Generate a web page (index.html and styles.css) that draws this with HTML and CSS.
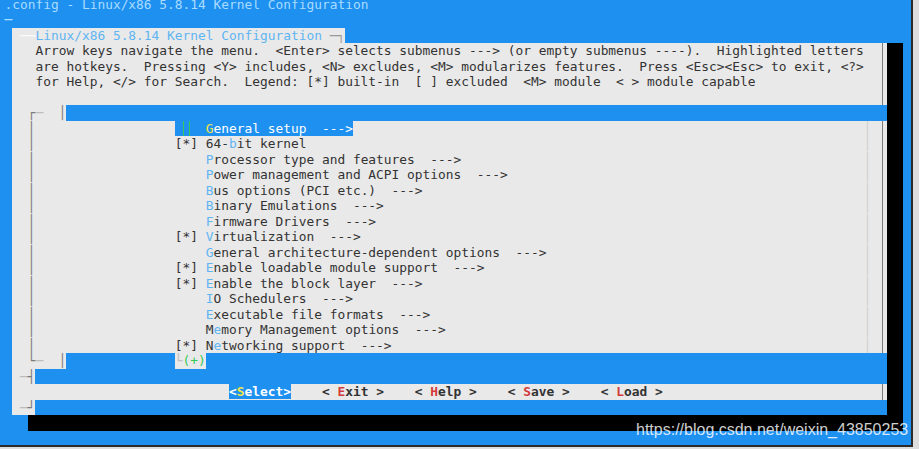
FILE: index.html
```html
<!DOCTYPE html>
<html lang="en">
<head>
<meta charset="UTF-8" />
<title>.config - Linux/x86 5.8.14 Kernel Configuration</title>
<link rel="stylesheet" href="styles.css">
</head>
<body>

<div class="screen">
  <div class="term">
    <div class="row"><span class="bt">.config - Linux/x86 5.8.14 Kernel Configuration</span></div>
    <div class="row"><span class="bt">─</span></div>
    <div class="row"><span class="c1"> </span><span class="tab"> <span class="wl">──</span><span class="hk">Linux/x86 5.8.14 Kernel Configuration</span> <span class="ln">─┐</span></span></div>
    <div class="row"><span class="c1"> </span><span class="dlg"><span>   Arrow keys navigate the menu.  &lt;Enter&gt; selects submenus ---&gt; (or empty submenus ----).  Highlighted letters</span></span><span class="sh"></span></div>
    <div class="row"><span class="c1"> </span><span class="dlg"><span>   are hotkeys.  Pressing &lt;Y&gt; includes, &lt;N&gt; excludes, &lt;M&gt; modularizes features.  Press &lt;Esc&gt;&lt;Esc&gt; to exit, &lt;?&gt;</span></span><span class="sh"></span></div>
    <div class="row"><span class="c1"> </span><span class="dlg"><span>   for Help, &lt;/&gt; for Search.  Legend: [*] built-in  [ ] excluded  &lt;M&gt; module  &lt; &gt; module capable</span></span><span class="sh"></span></div>
    <div class="row"><span class="c1"> </span><span class="dlg"></span><span class="sh"></span></div>
    <div class="row"><span class="c1"> </span><span class="dlg"><span class="dk">  ┌</span><span class="lt">─</span><span>  </span><span class="dk">│</span><span class="fill"></span></span><span class="sh"></span></div>
    <div class="row"><span class="c1"> </span><span class="dlg"><span class="dk">  │</span><span class="it sel"> <span class="mk"></span>  <span class="yk">G</span>eneral setup  ---&gt;</span><span class="vr">│</span></span><span class="sh"></span></div>
    <div class="row"><span class="c1"> </span><span class="dlg"><span class="dk">  │</span><span class="it">[*] 64-<span class="hk">b</span>it kernel</span><span class="vr">│</span></span><span class="sh"></span></div>
    <div class="row"><span class="c1"> </span><span class="dlg"><span class="dk">  │</span><span class="it">    <span class="hk">P</span>rocessor type and features  ---&gt;</span><span class="vr">│</span></span><span class="sh"></span></div>
    <div class="row"><span class="c1"> </span><span class="dlg"><span class="dk">  │</span><span class="it">    <span class="hk">P</span>ower management and ACPI options  ---&gt;</span><span class="vr">│</span></span><span class="sh"></span></div>
    <div class="row"><span class="c1"> </span><span class="dlg"><span class="dk">  │</span><span class="it">    <span class="hk">B</span>us options (PCI etc.)  ---&gt;</span><span class="vr">│</span></span><span class="sh"></span></div>
    <div class="row"><span class="c1"> </span><span class="dlg"><span class="dk">  │</span><span class="it">    <span class="hk">B</span>inary Emulations  ---&gt;</span><span class="vr">│</span></span><span class="sh"></span></div>
    <div class="row"><span class="c1"> </span><span class="dlg"><span class="dk">  │</span><span class="it">    <span class="hk">F</span>irmware Drivers  ---&gt;</span><span class="vr">│</span></span><span class="sh"></span></div>
    <div class="row"><span class="c1"> </span><span class="dlg"><span class="dk">  │</span><span class="it">[*] <span class="hk">V</span>irtualization  ---&gt;</span><span class="vr">│</span></span><span class="sh"></span></div>
    <div class="row"><span class="c1"> </span><span class="dlg"><span class="dk">  │</span><span class="it">    <span class="hk">G</span>eneral architecture-dependent options  ---&gt;</span><span class="vr">│</span></span><span class="sh"></span></div>
    <div class="row"><span class="c1"> </span><span class="dlg"><span class="dk">  │</span><span class="it">[*] <span class="hk">E</span>nable loadable module support  ---&gt;</span><span class="vr">│</span></span><span class="sh"></span></div>
    <div class="row"><span class="c1"> </span><span class="dlg"><span class="dk">  │</span><span class="it">[*] <span class="hk">E</span>nable the block layer  ---&gt;</span><span class="vr">│</span></span><span class="sh"></span></div>
    <div class="row"><span class="c1"> </span><span class="dlg"><span class="dk">  │</span><span class="it">    <span class="hk">I</span>O Schedulers  ---&gt;</span><span class="vr">│</span></span><span class="sh"></span></div>
    <div class="row"><span class="c1"> </span><span class="dlg"><span class="dk">  │</span><span class="it">    <span class="hk">E</span>xecutable file formats  ---&gt;</span><span class="vr">│</span></span><span class="sh"></span></div>
    <div class="row"><span class="c1"> </span><span class="dlg"><span class="dk">  │</span><span class="it">    M<span class="hk">e</span>mory Management options  ---&gt;</span><span class="vr">│</span></span><span class="sh"></span></div>
    <div class="row"><span class="c1"> </span><span class="dlg"><span class="dk">  │</span><span class="it">[*] N<span class="hk">e</span>tworking support  ---&gt;</span><span class="vr">│</span></span><span class="sh"></span></div>
    <div class="row"><span class="c1"> </span><span class="dlg"><span class="dk">  └</span><span class="lt">─</span><span>  </span><span class="dk">│</span><span class="bl">              </span><span class="more"><span class="lt">└</span><span class="grn">(+)</span></span><span class="fill"></span></span><span class="sh"></span></div>
    <div class="row"><span class="c1"> </span><span class="dlg"><span> <span class="lt">─</span><span class="dk">┤</span></span><span class="fill"></span></span><span class="sh"></span></div>
    <div class="row"><span class="c1"> </span><span class="dlg"><span>                            <span class="sel btn">&lt;<span class="yk">S</span>elect&gt;</span><span class="btn">    &lt; <span class="rk">E</span>xit &gt;    &lt; <span class="rk">H</span>elp &gt;    &lt; <span class="rk">S</span>ave &gt;    &lt; <span class="rk">L</span>oad &gt;</span></span></span><span class="sh"></span></div>
    <div class="row"><span class="c1"> </span><span class="dlg"><span> <span class="lt">─</span><span class="dk">┘</span></span><span class="fill"></span></span><span class="sh"></span></div>
    <div class="row"><span>   </span><span class="shb"></span></div>
    <div class="row"></div>
  </div>
  <div class="mark-url">https://blog.csdn.net/weixin_43850253</div>
</div>

</body>
</html>
```

FILE: styles.css
```css
body {
  margin: 0;
  background-color: #dedede;
  font-family: "DejaVu Sans Mono", monospace;
}
.screen {
  position: relative;
  width: 911px;
  height: 445px;
  overflow: hidden;
  background-color: #1e90f0; /* terminal blue */
  border-right: 2px solid #2b2b2b;
  border-bottom: 2px solid #2b2b2b;
}
.term {
  margin-top: -3.25px;
  padding-left: 4.5px;
  font-size: 12.873px; /* 1ch = 7.75px */
  line-height: 15.5px;
  color: #333;
}
.row {
  display: flex;
  height: 15.5px;
  white-space: pre;
}
.bt {
  color: #a9dcff;
}
.c1 {
  width: 1ch;
}
.tab {
  background-color: #e9e9e9;
}
.dlg {
  display: flex;
  width: 113ch;
  background: linear-gradient(to right, transparent calc(112.5ch - 1px), #7c7c7c 0, #7c7c7c 112.5ch, transparent 0), #e9e9e9;
}
.sh {
  width: 2ch;
  background-color: #000;
}
.shb {
  width: 113ch;
  background-color: #000;
}
.fill {
  flex: 1;
  background-color: #1e90f0;
}
.bl {
  background-color: #1e90f0;
}
.more {
  background-color: #e9e9e9;
}
.wl {
  color: #fafafa;
}
.lt {
  color: #bdbdbd;
}
.ln {
  color: #9a9a9a;
}
.dk {
  color: #7a7a7a;
}
.hk {
  color: #5fb5f2;
}
.it {
  margin-left: 18ch;
}
.vr {
  margin-left: auto;
  margin-right: 2ch;
  color: #cfcfcf;
}
.sel {
  background-color: #1e90f0;
  color: #fff;
}
.yk {
  color: #f3e547;
}
.rk {
  color: #d33b3b;
}
.grn {
  color: #35c95a;
}
.btn {
  font-weight: bold;
}
.mk {
  display: inline-block;
  width: 1ch;
  height: 15.5px;
  vertical-align: top;
  box-sizing: border-box;
  border-left: 1px solid #35c95a;
  border-right: 1px solid #35c95a;
}
.mark-url {
  position: absolute;
  left: 636px;
  top: 421px;
  font-family: "Liberation Sans", Arial, sans-serif;
  font-size: 16px;
  line-height: 18px;
  color: rgba(255, 255, 255, 0.82);
}
```
